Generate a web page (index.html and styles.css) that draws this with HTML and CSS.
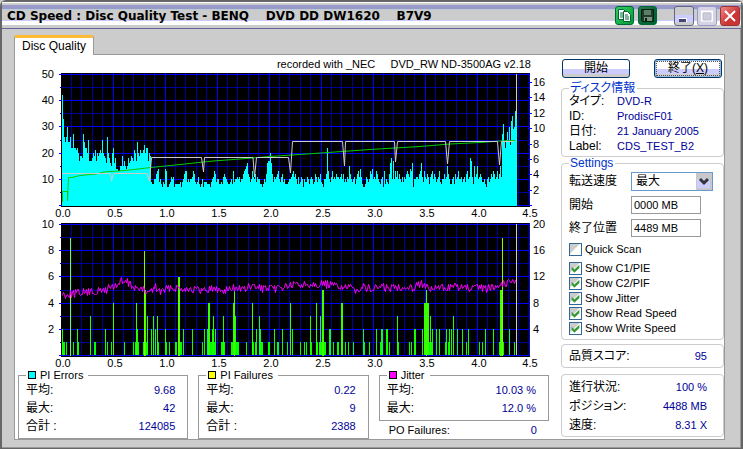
FILE: index.html
```html
<!DOCTYPE html>
<html lang="ja">
<head>
<meta charset="utf-8">
<title>CD Speed : Disc Quality Test</title>
<link rel="stylesheet" href="styles.css">
</head>
<body>
<div class="window">
  <header class="titlebar">
    <h1 class="title">CD Speed : Disc Quality Test - BENQ &nbsp;&nbsp; DVD DD DW1620 &nbsp;&nbsp; B7V9</h1>
    <div class="tools">
      <button class="tool copy" aria-label="Copy"><svg viewBox="1 1 17 17"><g fill="#fff" stroke="#063" stroke-width="1"><path d="M3.500 3.500h5l2 2v8h-7z"/><path d="M8.500 5.500h4l3 3v7h-7z"/></g><path d="M5 7h3M5 9h3M5 11h3M10 9h3M10 11h4M10 13h4" stroke="#063"/></svg></button>
      <button class="tool save" aria-label="Save"><svg viewBox="1 1 17 17"><path d="M3.500 3.500h12v12h-11l-1-1z" fill="#243a2c" stroke="#021"/><path d="M6 4h7v5H6z" fill="#597f65"/><path d="M6 11h8v4H6z" fill="#78937f"/><path d="M7 12h2v3H7z" fill="#021"/></svg></button>
    </div>
    <div class="controls">
      <button class="ctl" aria-label="Minimize"><svg viewBox="1 1 18 18"><path d="M5 14h8" stroke="#fff" stroke-width="4"/><path d="M5 14.500h7" stroke="#447" stroke-width="3"/></svg></button>
      <button class="ctl dim" aria-label="Maximize"><svg viewBox="1 1 18 18"><path d="M5 5.500h10v9H5z" fill="none" stroke="#fff" stroke-width="2"/><path d="M6 7h8v7H6z" fill="#ccd" stroke="#bbc"/></svg></button>
      <button class="ctl close" aria-label="Close"><svg viewBox="1 1 18 18"><path d="M5 5l10 10M15 5L5 15" stroke="#fff" stroke-width="2"/></svg></button>
    </div>
  </header>

  <main class="body">
    <div class="tabs"><button class="tab">Disc Quality</button></div>
    <div class="panel">
      <section class="results">
        <p class="recorder">recorded with _NEC &nbsp;&nbsp;&nbsp; DVD_RW ND-3500AG v2.18</p>
        <svg class="chart" id="errors" viewBox="15 71 546 149"></svg>
        <svg class="chart" id="failures" viewBox="15 220 546 148"></svg>
        <div class="stats">
          <fieldset class="stat">
            <legend><i class="swatch cyan"></i>PI Errors</legend>
            <dl><dt>平均:</dt><dd>9.68</dd><dt>最大:</dt><dd>42</dd><dt>合計 :</dt><dd>124085</dd></dl>
          </fieldset>
          <fieldset class="stat">
            <legend><i class="swatch yellow"></i>PI Failures</legend>
            <dl><dt>平均:</dt><dd>0.22</dd><dt>最大:</dt><dd>9</dd><dt>合計 :</dt><dd>2388</dd></dl>
          </fieldset>
          <div>
            <fieldset class="stat">
              <legend><i class="swatch magenta"></i>Jitter</legend>
              <dl><dt>平均:</dt><dd>10.03 %</dd><dt>最大:</dt><dd>12.0 %</dd></dl>
            </fieldset>
            <dl class="po"><dt>PO Failures:</dt><dd>0</dd></dl>
          </div>
        </div>
      </section>

      <aside class="side">
        <div class="actions">
          <button class="btn">開始</button>
          <button class="btn default">終了(<u>X</u>)</button>
        </div>
        <fieldset class="group disc">
          <legend>ディスク情報</legend>
          <dl><dt>タイプ:</dt><dd>DVD-R</dd><dt>ID:</dt><dd>ProdiscF01</dd><dt>日付:</dt><dd>21 January 2005</dd><dt>Label:</dt><dd>CDS_TEST_B2</dd></dl>
        </fieldset>
        <fieldset class="group settings">
          <legend>Settings</legend>
          <div class="fields">
            <label for="speed">転送速度</label>
            <span class="combo"><select id="speed"><option>最大</option></select><svg class="arrow" viewBox="0 0 16 17"><path d="M0 0h16v17H0z" fill="#c8c8cc"/><path d="M1 6h13v9H1z" fill="#ccf"/><path d="M4 6l4 4 4-4" fill="none" stroke="#333" stroke-width="3"/></svg></span>
            <label for="start">開始</label>
            <input class="text" id="start" value="0000 MB">
            <label for="end">終了位置</label>
            <input class="text" id="end" value="4489 MB">
          </div>
          <label class="check quick"><input type="checkbox">Quick Scan</label>
          <label class="check"><input type="checkbox" checked>Show C1/PIE</label>
          <label class="check"><input type="checkbox" checked>Show C2/PIF</label>
          <label class="check"><input type="checkbox" checked>Show Jitter</label>
          <label class="check"><input type="checkbox" checked>Show Read Speed</label>
          <label class="check"><input type="checkbox" checked>Show Write Speed</label>
        </fieldset>
        <dl class="group score"><dt>品質スコア:</dt><dd>95</dd></dl>
        <dl class="group progress"><dt>進行状況:</dt><dd>100 %</dd><dt>ポジション:</dt><dd>4488 MB</dd><dt>速度:</dt><dd>8.31 X</dd></dl>
      </aside>
    </div>
  </main>
</div>
<script src="charts.js"></script>
</body>
</html>
```
FILE: styles.css
```css
* { box-sizing: border-box; }
body {
  margin: 0;
  background: #ccc;
  color: #000;
  font: 12px/15px "Liberation Sans", "Noto Sans CJK JP", sans-serif;
}
button, input, select { font: inherit; color: inherit; margin: 0; padding: 0; }
dl, p, h1, fieldset { margin: 0; padding: 0; }
dd { margin: 0; color: #009; font-size: 11px; }
dl { display: grid; grid-template-columns: auto 1fr; font-feature-settings: "palt"; }

.window {
  min-height: 100vh;
  display: flex;
  flex-direction: column;
  border: 2px solid #666;
  border-radius: 6px 6px 0 0;
  background: #ccc;
}
.titlebar {
  display: flex;
  align-items: center;
  height: 27px;
  padding: 1px 0 0 5px;
  border-bottom: 1px solid #669;
  background: linear-gradient(#fff 0 1px, #ccc 1px 3px, #99c 3px 7px, #b8ccd4 7px 8px, #ccc 8px 18px, #ccf 18px 19px, #fff 19px 23px, #ccc 23px);
}
.title {
  flex: 1;
  font-size: 12px;
  line-height: 18px;
  font-family: "DejaVu Sans", sans-serif;
  white-space: pre-wrap;
}
.tools, .controls { display: flex; gap: 4px; }
.tools { margin-right: 17px; }
.controls { gap: 3px; margin-right: 1px; }
.tool, .ctl { border-radius: 3px; }
.tool svg, .ctl svg { display: block; width: 100%; height: 100%; }
.tool { width: 19px; height: 19px; border: 1px solid #063; background: #093; }
.tool.copy { background: linear-gradient(135deg, #3c6, #093); }
.tool.save { background: linear-gradient(135deg, #375, #063 70%); }
.ctl {
  width: 20px;
  height: 20px;
  border: 1px solid #668;
  background: linear-gradient(#ccc 0 8px, #ccf 8px 15px, #ccc 15px);
}
.ctl.dim { border-color: #99c; background: #d4d4e4; }
.ctl.close { border-color: #933; background: linear-gradient(135deg, #e88, #c33 60%); }

.body { flex: 1; display: flex; flex-direction: column; padding: 6px 15px 7px 12px; border: solid #999; border-width: 0 1px 1px 0; }
.tabs { display: flex; }
.tab {
  height: 20px;
  margin-bottom: -1px;
  padding: 0 7px;
  border: 1px solid #999;
  border-top: 3px solid #fb3;
  border-bottom: 0;
  border-radius: 3px 3px 0 0;
  background: #fff;
  position: relative;
}
.panel { flex: 1; display: flex; border: 1px solid #999; background: #fff; }

.results { flex: 1; min-width: 0; }
.recorder { height: 17px; padding: 2px 30px 0 0; text-align: right; font-size: 11px; }
.chart { display: block; width: 100%; overflow: visible; }
.chart text { font-size: 11px; }
.right { text-anchor: end; }
.mid { text-anchor: middle; }
.plot { fill: #000; }
.minor { stroke: #009; }
.major { stroke: #00f; }
.pie { fill: #0ff; }
.line { fill: none; }
.read { stroke: #0c0; }
.write { stroke: #ccc; }
.jitter { stroke: #f0f; }

.stats { display: grid; grid-template-columns: repeat(3, 1fr); gap: 10px; padding: 0 12px 0 3px; }
.stat { min-width: 0; border: 1px solid #999; padding: 0 12px 3px 7px; }
.stat legend { display: flex; align-items: center; gap: 4px; height: 12px; padding: 0 5px 0 2px; line-height: 12px; font-size: 11px; }
.stat dl { line-height: 18px; }
.stat dd, .po dd { text-align: right; }
.swatch { width: 8px; height: 8px; border: 1px solid #000; }
.cyan { background: #0ff; }
.yellow { background: #ff0; }
.magenta { background: #f0f; }
.po { padding: 2px 12px 0 10px; }
.po dt { font-size: 11px; }

.side { width: 163px; display: flex; flex-direction: column; }
.actions { display: flex; justify-content: space-between; padding: 4px 2px 4px 1px; }
.btn {
  width: 68px;
  height: 19px;
  line-height: 15px;
  border: 1px solid #036;
  border-radius: 3px;
  background: linear-gradient(#fff 0 9px, #ccf 9px 14px, #ccc 14px);
}
.btn.default { box-shadow: inset 0 0 0 1px #9bd; outline: 1px dotted #555; outline-offset: -3px; }
.group { min-width: 0; border: 1px solid #ccc; border-radius: 4px; padding: 0 16px 0 7px; }
.group legend { height: 12px; padding: 0 2px 0 1px; line-height: 12px; color: #03c; font-feature-settings: "palt"; }
.disc { padding-bottom: 2px; }
.disc dl { grid-template-columns: 48px 1fr; white-space: nowrap; }
.settings { padding-right: 10px; padding-bottom: 3px; }
.fields { display: grid; grid-template-columns: 62px 1fr; row-gap: 5px; align-items: center; padding-top: 3px; }
.combo { display: flex; height: 19px; border: 1px solid #69c; }
.combo select { flex: 1; min-width: 0; appearance: none; border: 0; background: #fff; padding-left: 4px; line-height: 15px; }
.arrow { width: 16px; height: 17px; }
.text { width: 70px; height: 18px; border: 1px solid #999; padding: 0 2px; background: #fff; font-size: 11px; }
.check { display: flex; align-items: center; gap: 3px; height: 15px; font-size: 11px; }
.quick { margin: 5px 0 4px; }
.check input {
  flex: none;
  appearance: none;
  width: 13px;
  height: 13px;
  border: 1px solid #369;
  background: linear-gradient(135deg, #ccc 40%, #fff 48%);
}
.check input:checked::before {
  content: "";
  display: block;
  width: 11px;
  height: 11px;
  background: #393;
  clip-path: polygon(15% 35%, 40% 60%, 85% 15%, 85% 45%, 40% 88%, 15% 62%);
}
.score { margin-top: 4px; padding-top: 4px; height: 24px; }
.score dd, .progress dd { text-align: right; }
.progress { margin-top: 6px; padding-top: 3px; line-height: 19px; padding-bottom: 1px; }
```
FILE: charts.js
```js
const LEFT = 61, RIGHT = 530, STEP = 10.4;

const line = (x1, y1, x2, y2, cls) =>
  `<line x1="${x1}" y1="${y1}" x2="${x2}" y2="${y2}" class="${cls}"/>`;
const label = (x, y, text, cls = '') => `<text x="${x}" y="${y}" class="${cls}">${text}</text>`;

function frame(top, leftMax, leftStep) {
  let out = `<rect x="${LEFT}" y="${top}" width="${RIGHT - LEFT}" height="134" class="plot"/>`;
  const xs = [...Array(46).keys()].map(i => Math.floor(LEFT + i * STEP) + 0.5);
  const ys = [...Array(11).keys()].map(i => Math.round(top + 1 + i * 13.1) + 0.5);
  xs.forEach((x, i) => { if (i % 5 && x < RIGHT) out += line(x, top, x, top + 133, 'minor'); });
  ys.forEach((y, i) => { if (i % 2) out += line(LEFT - 1, y, RIGHT - 1, y, 'minor'); });
  xs.forEach((x, i) => { if (i % 5 === 0 && i && x < RIGHT) out += line(x, top, x, top + 133, 'major'); });
  ys.forEach((y, i) => {
    if (i % 2) return;
    out += line(LEFT - 2, y, RIGHT - 1, y, 'major');
    if (i < 10) out += label(54, y + 3.5, leftMax - i / 2 * leftStep, 'right');
  });
  for (let i = 0; i < 10; i++) out += label((i < 9 ? 63 : 62) + i * 52, top + 144, (i / 2).toFixed(1), 'mid');
  return out;
}

const head = [42,33,26,24,26,30,24,24,26,22,22,27,22,22,21,22,20,17,19,19,18,27,24,22,22,20,25,17,17,17,
  18,20,19,21,17,20,19,20,21,20,25,20,19,18,16,26,20,18,16,15,20,22,16,18,14,14,13,13,15,15,
  19,15,17,15,14,15,18,16,17,19,18,17,21,20,17,24,20,19,21,20,20,21,23,20,22,22,17,20,19,9];
/* base-36 digits, one per pixel column */
const middle = '88aacde9a8798ed7789bab788888979acdd9a9aabdc989b878a799988879' +
  'abdc9aa8898bcba9889a8d9aabab9aacdefgcb9adbac9baa8878a9cghhkgc9ba' +
  'bcda9bc9a8889aabcdbca8b89ba7a99ba8aba89cb9bac987aacmda9bdabacbba' +
  'bcac9a9bafca9ab8acdbeb8778ba9adceabadca98ab7d8a98cgiahadbdaca9b9b' +
  'acdcbedg7aabbacdgb9dbacb8bcdacb9abd98aacabfca88ab8cabdaab9ab9cda' +
  'bihb8fbcfabcb99a87ab9acbd';
const tail = 'cabdacfbc9badcbfbcad9bcdeabcffg';
const rise = [27,31,24,22,25,28,24,30,23,32,34,29,30,36,33];

const body = [...(middle + tail)].map(c => parseInt(c, 36)).slice(0, 350);
while (body.length < 350) body.push(11);
const pie = head.concat(body, rise);

let area = 'M62 205';
pie.forEach((v, i) => { area += `V${Math.round(204.5 - v * 2.63)}H${63 + i}`; });
area += 'V205Z';

let errors = frame(72, 50, 10) + `<path d="${area}" class="pie" shape-rendering="crispEdges"/>`;
errors += '<polyline class="line read" points="62.500,201 62.500,190.500 67.500,190.500 67.500,200 68.500,176.500 72,176.500 80,174.500 96,173 104,171 125,169.500 151,166.500 180,163.500 213,160 240,158 270,155.500 292,154 335,151 370,148.500 420,145.500 450,143 480,141.500 500,140 515,139.500"/>';
errors += '<polyline class="line write" points="62,172.500 110.500,172.500 111.500,180 113.500,172.500 147,172.500 149.500,180 151.500,156.500 201.500,156.500 203.500,171 204.500,156.500 253,156.500 254.500,176 256.500,156.500 288.500,156.500 290.500,172 292.500,140.500 342.500,140.500 344.500,165 345.500,140.500 394.500,140.500 395.500,161 397.500,140.500 445.500,140.500 447.500,163 449.500,140.500 497.500,140.500 499.500,164 501.500,140.500 514,140.500"/>';
errors += line(516.5, 73, 516.5, 118, 'write');
for (let i = 0; i < 9; i++) {
  const y = Math.round(81 + i * 15.4) + 0.5;
  errors += line(528, y, 532, y, 'major');
  if (i < 8) errors += label(533, y + 3.5, 16 - i * 2);
}
document.getElementById('errors').innerHTML = errors;

/* columns grouped by height */
const pif = {
  1: [63,64,66,73,78,94,95,107,111,124,133,135,138,143,146,158,166,169,175,176,180,181,202,210,211,214,221,222,224,231,232,236,237,238,246,253,255,261,262,268,269,277,278,287,300,304,306,311,317,319,321,324,325,333,337,338,345,348,353,364,369,380,389,398,409,411,429,431,445,448,466,479,482,499,503,514],
  2: [62,77,105,137,151,155,165,183,192,204,207,212,215,256,260,274,282,292,329,330,363,376,381,382,386,387,414,415,422,432,436,439,446,449,451,457,462,468,485,493,509],
  3: [90,147,153,157,213,223,235,259,310,320,397,430,453],
  4: [113,136,208,209,233,252,290,316,341,342,424,425,427,428],
  5: [145,234,322,323,426,500,501],
  6: [178,179],
  8: [144],
  9: [70,502]
};
let failures = frame(222, 10, 2);
for (const [h, xs] of Object.entries(pif)) {
  xs.forEach(x => {
    failures += `<rect x="${x}" y="${Math.round(354.5 - h * 13.1)}" width="1" height="${Math.round(h * 13.1)}" fill="rgb(${h * 17 - 17},255,0)"/>`;
  });
}

const trend = [[62,293],[80,291],[100,290],[112,285],[118,283],[120,281],[125,281],[135,286],[148,291],[155,286],[160,290],[170,286],[190,287],[200,289],[212,287],[220,289],[238,286],[243,289],[250,285],[270,288],[290,284],[312,282],[325,283],[340,285],[355,288],[362,285],[370,288],[380,285],[388,287],[400,285],[412,286],[420,281],[428,288],[450,285],[460,286],[470,287],[487,287],[495,284],[503,282],[510,280],[516,278]];
let points = '', seed = 7, k = 0;
for (let x = 62; x <= 516; x++) {
  while (k < trend.length - 2 && x > trend[k + 1][0]) k++;
  const [x0, y0] = trend[k], [x1, y1] = trend[k + 1];
  seed = (seed * 1103515245 + 12345) % 2147483648;
  const noise = (seed / 2147483648 - 0.5) * (x > 105 && x < 130 ? 11 : 8);
  points += `${x + 0.5},${Math.round(y0 + (y1 - y0) * (x - x0) / (x1 - x0) + noise) + 0.5} `;
}
failures += `<polyline class="line jitter" points="${points}"/>`;
failures += line(516.5, 223, 516.5, 354, 'write');
for (let i = 0; i < 5; i++) failures += label(533, Math.round(227 + i * 26.2), 20 - i * 4);
document.getElementById('failures').innerHTML = failures;
```
